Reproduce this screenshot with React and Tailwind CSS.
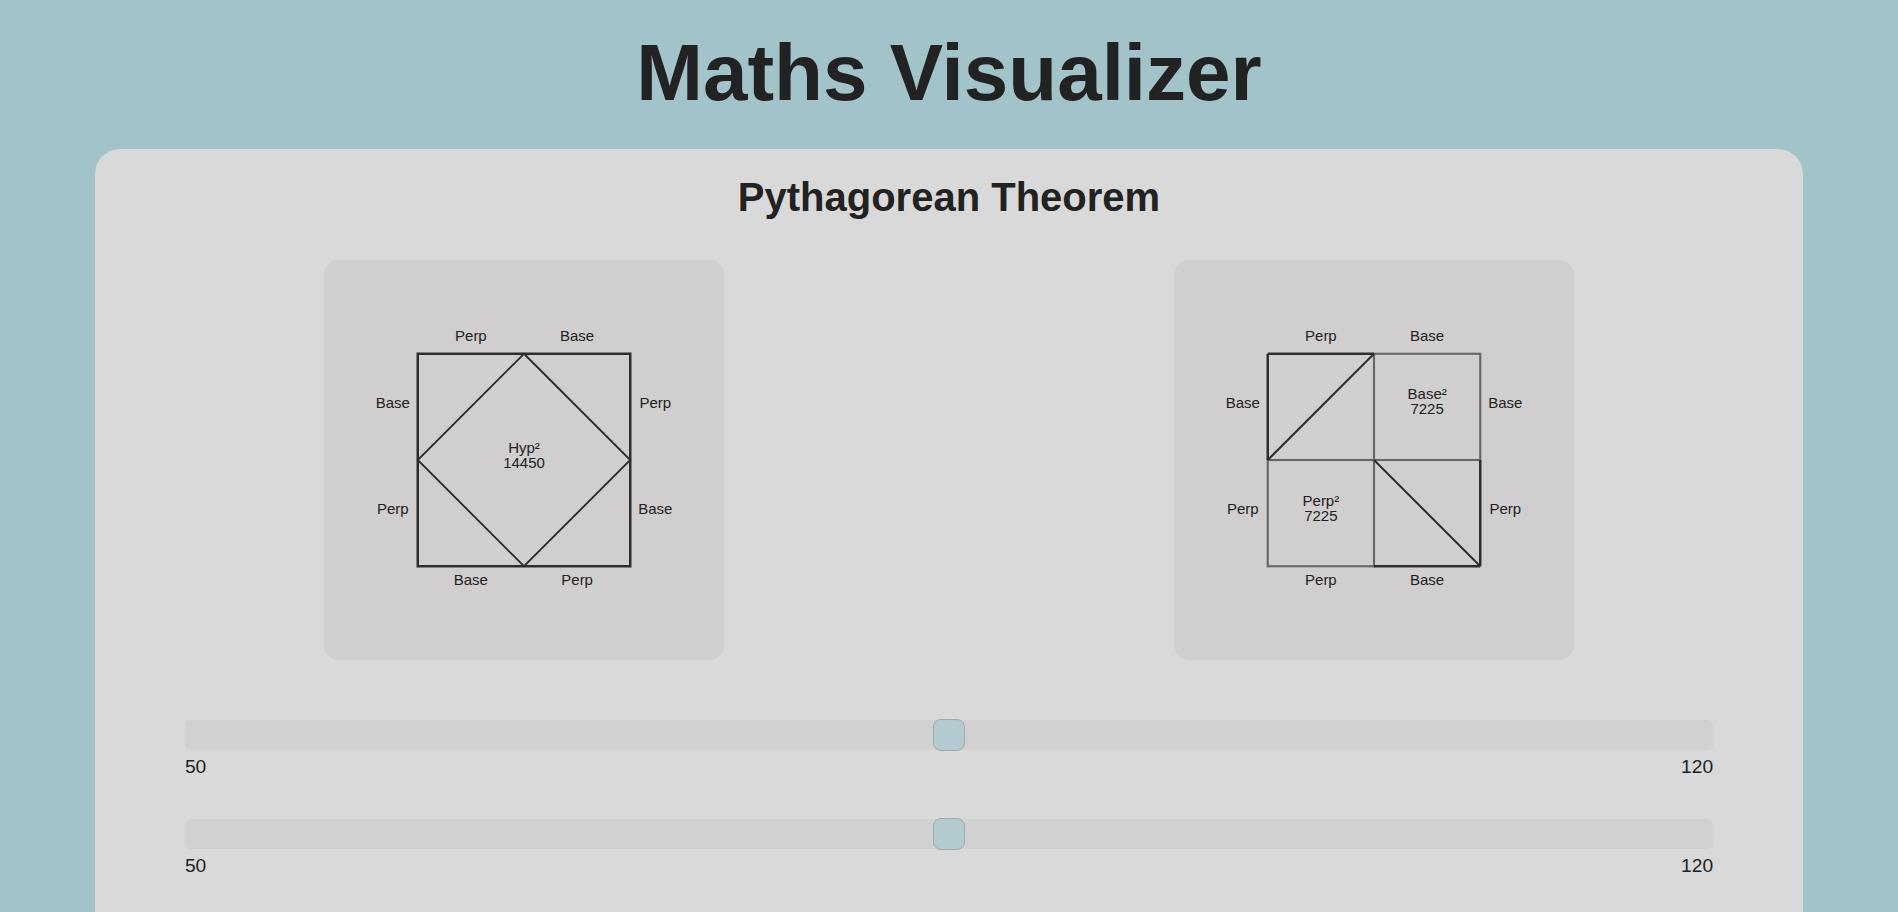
import React from "react";

const FONT = { fontFamily: '"Liberation Sans", Arial, sans-serif' };

function Label({ x, y, children }) {
  return (
    <text x={x} y={y} textAnchor="middle" fontSize="12" fill="#222" style={FONT}>
      {children}
    </text>
  );
}

function TwoLine({ x, y, a, b }) {
  return (
    <text textAnchor="middle" fontSize="12" fill="#222" style={FONT}>
      <tspan x={x} y={y - 6}>{a}</tspan>
      <tspan x={x} y={y + 6}>{b}</tspan>
    </text>
  );
}

function LeftDiagram({ base, perp }) {
  const o = 75;
  const s = base + perp;
  const e = o + s;
  return (
    <svg width="400" height="400" viewBox="0 0 320 320">
      <rect x={o} y={o} width={s} height={s} fill="none" stroke="#2e2e2e" strokeWidth="2" />
      <polygon
        points={`${o + perp},${o} ${e},${o + perp} ${o + base},${e} ${o},${o + base}`}
        fill="none"
        stroke="#2e2e2e"
        strokeWidth="1.5"
      />
      <Label x={o + perp / 2} y={o - 10}>Perp</Label>
      <Label x={o + perp + base / 2} y={o - 10}>Base</Label>
      <Label x={o + base / 2} y={e + 15}>Base</Label>
      <Label x={o + base + perp / 2} y={e + 15}>Perp</Label>
      <Label x={o - 20} y={o + base / 2 + 1}>Base</Label>
      <Label x={o - 20} y={o + base + perp / 2 + 1}>Perp</Label>
      <Label x={e + 20} y={o + perp / 2 + 1}>Perp</Label>
      <Label x={e + 20} y={o + perp + base / 2 + 1}>Base</Label>
      <TwoLine x={o + s / 2} y={o + s / 2} a="Hyp²" b={String(base * base + perp * perp)} />
    </svg>
  );
}

function RightDiagram({ base, perp }) {
  const o = 75;
  const s = base + perp;
  const e = o + s;
  const m = o + perp;
  const mb = o + base;
  return (
    <svg width="400" height="400" viewBox="0 0 320 320">
      <rect x={m} y={o} width={base} height={base} fill="none" stroke="#666" strokeWidth="1.7" />
      <rect x={o} y={mb} width={perp} height={perp} fill="none" stroke="#666" strokeWidth="1.7" />
      <line x1={o} y1={o} x2={m} y2={o} stroke="#2e2e2e" strokeWidth="2" />
      <line x1={o} y1={o} x2={o} y2={mb} stroke="#2e2e2e" strokeWidth="2" />
      <line x1={m} y1={o} x2={o} y2={mb} stroke="#2e2e2e" strokeWidth="1.6" />
      <line x1={e} y1={mb} x2={e} y2={e} stroke="#2e2e2e" strokeWidth="2" />
      <line x1={m} y1={e} x2={e} y2={e} stroke="#2e2e2e" strokeWidth="2" />
      <line x1={m} y1={mb} x2={e} y2={e} stroke="#2e2e2e" strokeWidth="1.6" />
      <Label x={o + perp / 2} y={o - 10}>Perp</Label>
      <Label x={m + base / 2} y={o - 10}>Base</Label>
      <Label x={o + perp / 2} y={e + 15}>Perp</Label>
      <Label x={m + base / 2} y={e + 15}>Base</Label>
      <Label x={o - 20} y={o + base / 2 + 1}>Base</Label>
      <Label x={o - 20} y={mb + perp / 2 + 1}>Perp</Label>
      <Label x={e + 20} y={o + base / 2 + 1}>Base</Label>
      <Label x={e + 20} y={mb + perp / 2 + 1}>Perp</Label>
      <TwoLine x={m + base / 2} y={o + base / 2} a="Base²" b={String(base * base)} />
      <TwoLine x={o + perp / 2} y={mb + perp / 2} a="Perp²" b={String(perp * perp)} />
    </svg>
  );
}

function Slider({ value, min, max }) {
  const pct = ((value - min) / (max - min)) * 100;
  return (
    <div className="flex flex-col">
      <div className="relative h-[30px] rounded-[5px] bg-[#d1d1d1]">
        <div
          className="absolute top-[-1px] h-[32px] w-[32px] -translate-x-1/2 rounded-[8px] border border-[#a3a8a9] bg-[#b3cbd0]"
          style={{ left: `calc(16px + (100% - 32px) * ${pct / 100})` }}
        />
      </div>
      <div className="mt-[6px] flex justify-between text-[19.2px] leading-[22px] text-[#222]">
        <span>{min}</span>
        <span>{max}</span>
      </div>
    </div>
  );
}

export default function App() {
  const base = 85;
  const perp = 85;
  return (
    <div
      className="min-h-screen bg-[#a2c3ca] pt-[27px] text-[#222]"
      style={FONT}
    >
      <h1 className="mb-[30px] text-center text-[80px] font-bold leading-[92px] text-[#222]">
        Maths Visualizer
      </h1>
      <div className="mx-auto w-[90%] rounded-[25px] bg-[#d9d9d9] pb-[60px] pt-[25px]">
        <h2 className="text-center text-[40px] font-bold leading-[46px] text-[#222]">
          Pythagorean Theorem
        </h2>
        <div className="mx-[5px] mt-[40px] flex justify-around">
          <div className="h-[400px] w-[400px] rounded-[15px] bg-[#d0cece]">
            <LeftDiagram base={base} perp={perp} />
          </div>
          <div className="h-[400px] w-[400px] rounded-[15px] bg-[#d0cece]">
            <RightDiagram base={base} perp={perp} />
          </div>
        </div>
        <div className="mt-[60px] flex flex-col gap-[41px] px-[90px]">
          <Slider value={base} min={50} max={120} />
          <Slider value={perp} min={50} max={120} />
        </div>
      </div>
    </div>
  );
}
